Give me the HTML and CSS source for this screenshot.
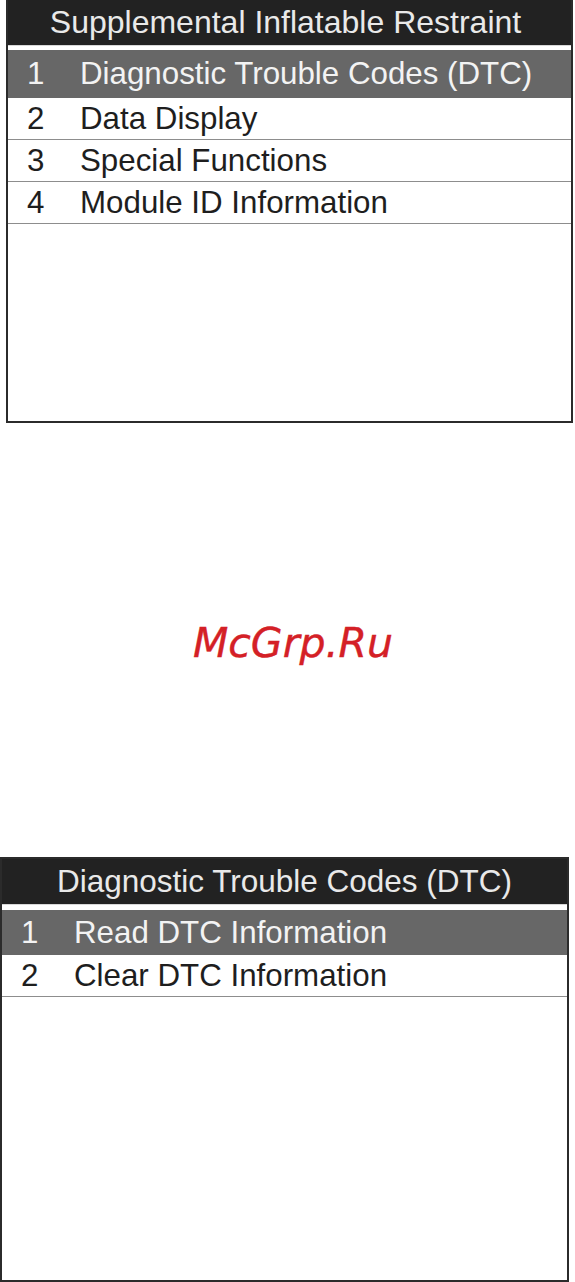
FILE: index.html
```html
<!DOCTYPE html>
<html>
<head>
<meta charset="utf-8">
<link rel="stylesheet" href="styles.css">
</head>
<body>
<div class="page">
  <div class="screen screen-one">
    <div class="head head-one">Supplemental Inflatable Restraint</div>
    <div class="gap"></div>
    <div class="row sel tall"><span class="num">1</span><span class="label">Diagnostic Trouble Codes (DTC)</span></div>
    <div class="row"><span class="num">2</span><span class="label">Data Display</span></div>
    <div class="row"><span class="num">3</span><span class="label">Special Functions</span></div>
    <div class="row"><span class="num">4</span><span class="label">Module ID Information</span></div>
  </div>
  <div class="mark"><span class="mark-text">McGrp.Ru</span></div>
  <div class="screen screen-two">
    <div class="head head-two">Diagnostic Trouble Codes (DTC)</div>
    <div class="gap gap-two"></div>
    <div class="row sel mid"><span class="num">1</span><span class="label">Read DTC Information</span></div>
    <div class="row"><span class="num">2</span><span class="label">Clear DTC Information</span></div>
  </div>
</div>
</body>
</html>
```

FILE: styles.css
```css
html, body {
  margin: 0;
  padding: 0;
  background: #ffffff;
}

.page {
  width: 575px;
  height: 1282px;
  display: flex;
  flex-direction: column;
  font-family: "Liberation Sans", Arial, sans-serif;
}

.screen {
  box-sizing: border-box;
  border: 2px solid #2b2b2b;
  background: #ffffff;
  display: flex;
  flex-direction: column;
  flex: none;
}

.screen-one {
  margin-left: 6px;
  width: 567px;
  height: 423px;
  border-top: none;
}

.screen-two {
  margin-left: 0;
  width: 569px;
  height: 425px;
}

.head {
  background: #222222;
  color: #e9e9e9;
  font-size: 32px;
  display: flex;
  align-items: center;
  justify-content: center;
  flex: none;
}

.head-one {
  height: 45px;
  padding-right: 8px;
  box-sizing: border-box;
}

.head-two {
  height: 45px;
  font-size: 31.5px;
}

.gap {
  height: 5px;
  background: #ffffff;
  border-top: 1px solid #d8d8d8;
  box-sizing: border-box;
  flex: none;
}

.gap-two {
  height: 6px;
}

.row {
  box-sizing: border-box;
  height: 42px;
  border-bottom: 1px solid #8d8d8d;
  display: flex;
  align-items: center;
  padding-left: 19px;
  color: #1e1e1e;
  font-size: 31.3px;
  flex: none;
}

.row.sel {
  background: #676767;
  color: #f3f3f3;
  border-bottom: none;
}

.row.tall {
  height: 48px;
}

.row.mid {
  height: 45px;
}

.num {
  width: 53px;
  flex: none;
}

.label {
  white-space: nowrap;
}

.mark {
  flex: none;
  height: 434px;
  display: flex;
  align-items: center;
  justify-content: center;
  padding-left: 11px;
  box-sizing: border-box;
}

.mark-text {
  font-family: "DejaVu Sans", sans-serif;
  font-style: italic;
  font-size: 41px;
  color: #d42026;
  padding-top: 6px;
  -webkit-text-stroke: 0.4px #d42026;
}
```
